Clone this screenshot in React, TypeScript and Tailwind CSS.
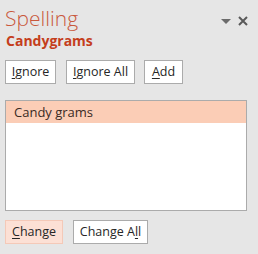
import React from "react";

function Btn({
  children,
  active,
  className,
}: {
  children: React.ReactNode;
  active?: boolean;
  className?: string;
}) {
  return (
    <button
      className={
        "h-6 flex items-center justify-center whitespace-nowrap border text-[12.5px] leading-none text-[#262626] " +
        (active ? "bg-[#fce0d5] border-[#f4c9b8] " : "bg-white border-[#ababab] ") +
        (className || "")
      }
    >
      {children}
    </button>
  );
}

export default function App() {
  return (
    <div
      className="w-[258px] h-[254px] bg-[#e6e6e6] overflow-hidden"
      style={{ fontFamily: '"Open Sans", "Noto Sans", sans-serif' }}
    >
      <div className="flex items-start justify-between pl-[5px] pr-[10px] pt-[4px]">
        <div className="text-[21px] font-light leading-[28px] text-[#c9583c]">Spelling</div>
        <div className="flex items-center gap-[7px] pt-[12px]">
          <svg width="10" height="5" viewBox="0 0 10 5">
            <path d="M0 0h10L5 5z" fill="#6b6b6b" />
          </svg>
          <svg width="10" height="10" viewBox="0 0 10 10">
            <path d="M1 1l8 8M9 1l-8 8" stroke="#595959" strokeWidth="2" />
          </svg>
        </div>
      </div>
      <div className="pl-[6px] text-[14px] font-bold leading-[20px] text-[#c43e1c] -mt-[1px]">
        Candygrams
      </div>
      <div className="flex gap-[10px] pl-[5px] mt-[9px]">
        <Btn className="w-[51px]">
          <span className="underline underline-offset-2">I</span>gnore
        </Btn>
        <Btn className="w-[69px]">
          <span className="underline underline-offset-2">I</span>gnore All
        </Btn>
        <Btn className="w-[39px] ml-[-1px]">
          <span className="underline underline-offset-2">A</span>dd
        </Btn>
      </div>
      <div className="mx-[5px] w-[242px] mt-[16px] h-[111px] bg-white border border-[#ababab]">
        <div className="h-[22px] bg-[#fbcdb6] pl-[8px] text-[13px] leading-[22px] text-[#3a2a24]">
          Candy grams
        </div>
      </div>
      <div className="flex gap-[10px] pl-[5px] mt-[9px]">
        <Btn active className="w-[58px]">
          <span className="underline underline-offset-2">C</span>hange
        </Btn>
        <Btn className="w-[75px]">
          Change A<span className="underline underline-offset-2">l</span>l
        </Btn>
      </div>
    </div>
  );
}
